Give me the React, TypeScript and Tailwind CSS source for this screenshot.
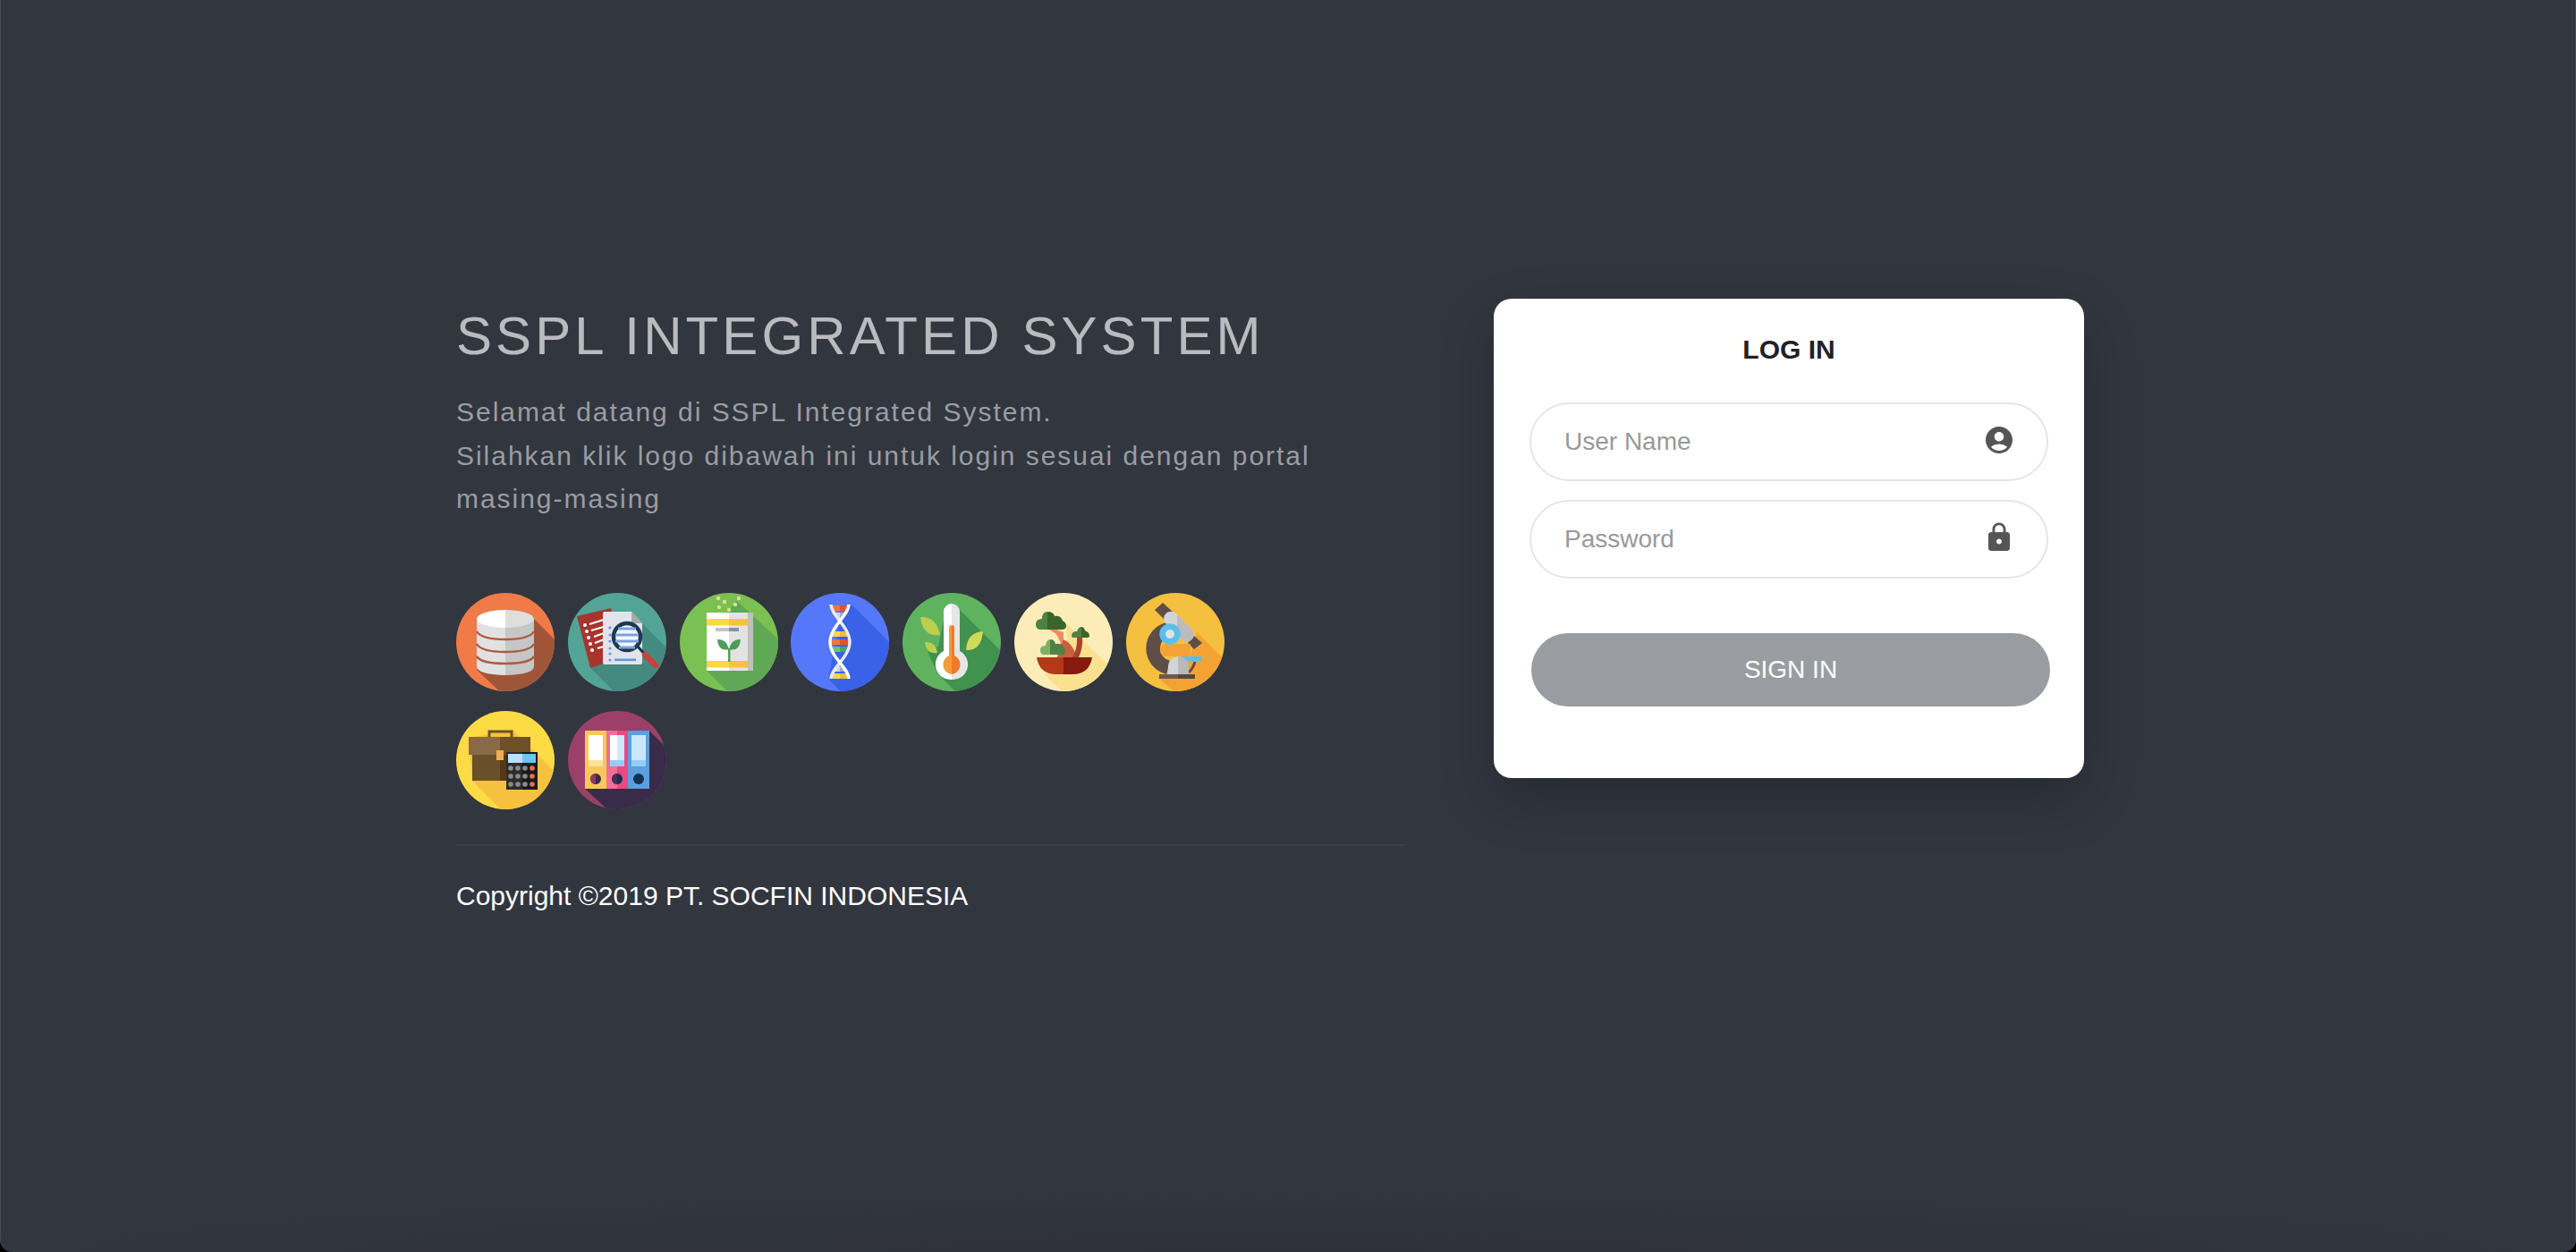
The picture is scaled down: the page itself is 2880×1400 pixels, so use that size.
import React from "react";
import { MdAccountCircle, MdLock } from "react-icons/md";

const Disc = ({ id, bg, shadow, points, children }: { id: string; bg: string; shadow: string; points: string; children: React.ReactNode }) => (
  <svg viewBox="0 0 110 110" className="w-[110px] h-[110px] shrink-0">
    <defs>
      <clipPath id={id}>
        <circle cx="55" cy="55" r="55" />
      </clipPath>
    </defs>
    <g clipPath={`url(#${id})`}>
      <rect width="110" height="110" fill={bg} />
      <polygon points={points} fill={shadow} />
      {children}
    </g>
  </svg>
);

const Database = () => (
  <Disc id="d1" bg="#f07a48" shadow="#a15538" points="87,29 125,67 125,125 64,125 23,86">
    <path d="M23 29V82Q23 91 55 92V29Z" fill="#e1e1e1" />
    <path d="M87 29V82Q87 91 55 92V29Z" fill="#c6c6c6" />
    <path d="M23 29A32 10 0 0 1 55 19V39A32 10 0 0 1 23 29Z" fill="#ffffff" />
    <path d="M87 29A32 10 0 0 0 55 19V39A32 10 0 0 0 87 29Z" fill="#dedede" />
    <path d="M23 43Q28 52 55 52Q82 52 87 43M23 57Q28 66 55 66Q82 66 87 57M23 71Q28 79 55 79Q82 79 87 71" fill="none" stroke="#ad5c3f" strokeWidth="2.4" />
  </Disc>
);

const Docs = () => (
  <Disc id="d2" bg="#52a596" shadow="#458a80" points="83,34 125,76 125,125 66,125 25,84 39,60 66,21">
    <polygon points="10,26 48,17 60,72 25,84" fill="#a8342c" />
    <g fill="#ffffff">
      <circle cx="19" cy="36" r="2" />
      <circle cx="21" cy="43" r="2" />
      <circle cx="23" cy="50" r="2" />
      <circle cx="25" cy="57" r="2" />
      <circle cx="27" cy="64" r="2" />
    </g>
    <path d="M24 35L43 29M26 42L43 37M29 49L43 44M30 56L43 51M33 62L43 59" stroke="#ffffff" strokeWidth="2.2" />
    <path d="M39 23Q39 21 41 21H71L83 34V78Q83 80 81 80H42Q39 80 39 78Z" fill="#e2e4ec" />
    <polygon points="71,21 83,34 71,34" fill="#a9a9a9" />
    <g fill="#6a94d8">
      <circle cx="47" cy="39" r="1.6" />
      <circle cx="47" cy="47" r="1.6" />
      <circle cx="47" cy="54" r="1.6" />
      <circle cx="47" cy="62" r="1.6" />
      <circle cx="47" cy="68" r="1.6" />
      <circle cx="47" cy="75" r="1.6" />
      <rect x="52" y="73.5" width="24" height="2.6" />
    </g>
    <path d="M78 60L88 71" stroke="#17304a" strokeWidth="3" />
    <path d="M86 69L98 81" stroke="#c9423a" strokeWidth="6.5" strokeLinecap="round" />
    <circle cx="66" cy="49" r="15" fill="#f4f6fb" stroke="#1c3a52" strokeWidth="4.5" />
    <path d="M56 40H76M53 47H79M53 54H79M57 61H75" stroke="#7ba2e0" strokeWidth="3" />
  </Disc>
);

const Seed = () => (
  <Disc id="d3" bg="#7ac052" shadow="#60a856" points="64,9 125,66 125,125 68,125 30,87 30,22 52,22">
    <rect x="30" y="22" width="25" height="65" fill="#ffffff" />
    <rect x="55" y="22" width="21" height="65" fill="#e3e3e3" />
    <rect x="76" y="22" width="6" height="65" fill="#bfbfbf" />
    <rect x="30" y="29" width="25" height="7.5" fill="#fdd843" />
    <rect x="55" y="29" width="21" height="7.5" fill="#f5c242" />
    <rect x="30" y="76" width="25" height="7.5" fill="#fdd843" />
    <rect x="55" y="76" width="21" height="7.5" fill="#f5c242" />
    <rect x="40" y="39" width="15" height="4" fill="#c4c4c4" />
    <rect x="55" y="39" width="11" height="4" fill="#7f95a5" />
    <rect x="54" y="62" width="2.5" height="15" fill="#5a9e5b" />
    <path d="M42 52Q52 51 55 63Q43 66 42 52Z" fill="#4d9c5a" />
    <path d="M68 52Q58 51 55 63Q67 66 68 52Z" fill="#4d9c5a" />
    <g fill="#e5dc8d">
      <circle cx="43" cy="6" r="2.2" />
      <circle cx="50" cy="10" r="2.2" />
      <circle cx="44" cy="16" r="2.2" />
      <circle cx="55" cy="19" r="2.2" />
      <circle cx="62" cy="13" r="2.2" />
      <circle cx="66" cy="6" r="2.2" />
    </g>
  </Disc>
);

const Dna = () => {
  const rungs: [number, number, string, string][] = [
    [17, 8, "#f0773a", "#e5512c"],
    [25, 5, "#d3d5dd", "#a9abb3"],
    [46, 8, "#fbd84a", "#f3bd3b"],
    [55, 10, "#f0773a", "#e5512c"],
    [63, 8, "#6ec36d", "#49a65e"],
    [85, 5, "#d3d5dd", "#a9abb3"],
    [93, 8, "#fbd84a", "#f3bd3b"],
  ];
  return (
    <Disc id="d4" bg="#5578fa" shadow="#3a62e8" points="68,13 125,70 125,125 70,125 42,96 55,30">
      {rungs.map(([y, w, a, b]) => (
        <g key={y}>
          <rect x={55 - w} y={y - 3} width={w} height="6" fill={a} />
          <rect x="55" y={y - 3} width={w} height="6" fill={b} />
        </g>
      ))}
      <g fill="none" strokeWidth="3.4">
        <path d="M45 13C45 25 66 38 66 55C66 72 45 84 45 96" stroke="#e8eaf6" />
        <path d="M65 13C65 25 44 38 44 55C44 72 65 84 65 96" stroke="#ffffff" />
      </g>
    </Disc>
  );
};

const Thermo = () => (
  <Disc id="d5" bg="#5fb35f" shadow="#41914f" points="64,19 125,80 125,125 74,125 39,90 28,66 40,60 46,30">
    <path d="M20 27Q38 26 42 47Q23 50 20 27Z" fill="#bdcf4c" />
    <path d="M25 55Q37 54 39 67Q27 69 25 55Z" fill="#bdcf4c" />
    <path d="M90 43Q72 44 71 64Q88 65 90 43Z" fill="#d0da5a" />
    <path d="M46 21A9 9 0 0 1 55 12V97A17 17 0 0 1 46 65Z" fill="#ffffff" />
    <path d="M64 21A9 9 0 0 0 55 12V97A17 17 0 0 0 64 65Z" fill="#e6e6e6" />
    <path d="M52 39A3 3 0 0 1 55 36V91A11 11 0 0 1 52 70Z" fill="#f39c3a" />
    <path d="M58 39A3 3 0 0 0 55 36V91A11 11 0 0 0 58 70Z" fill="#ee7b2c" />
  </Disc>
);

const Bonsai = () => (
  <Disc id="d6" bg="#fcedb8" shadow="#fae18f" points="58,34 125,101 125,125 69,125 33,91 60,72">
    <path d="M36 40Q48 44 50 52Q55 60 50 72H55V44Q44 40 42 38Z" fill="#ee8a5e" />
    <path d="M55 52Q65 56 70 72H48Q50 62 55 52Z" fill="#c9603c" />
    <path d="M65 72Q71 62 70 48H76Q77 62 72 72Z" fill="#a5452a" />
    <path d="M25 72H55V91H47Q28 91 25 72Z" fill="#b23a18" />
    <path d="M87 72H55V91H65Q84 91 87 72Z" fill="#871a0f" />
    <path d="M37 41H30Q24 41 24 35Q24 29 31 29Q31 21 37 21Z" fill="#4f8145" />
    <path d="M37 21Q44 21 45 26Q52 25 54 31Q58 33 58 37Q58 41 53 41H37Z" fill="#3a6428" />
    <path d="M64 48Q64 43 70 43Q72 38 75 38V50H67Q64 50 64 48Z" fill="#4f8145" />
    <path d="M75 38Q78 38 79 42Q84 44 84 48Q84 50 81 50H75Z" fill="#3a6428" />
    <path d="M40 69H33Q29 69 29 64Q29 59 35 59Q36 52 40 52Z" fill="#7fae68" />
    <path d="M40 52Q45 52 46 57Q53 56 55 60Q57 62 57 65Q57 69 53 69H40Z" fill="#4f8145" />
  </Disc>
);

const Microscope = () => (
  <Disc id="d7" bg="#f5c040" shadow="#f5a235" points="79,44 125,90 125,125 70,125 35,94 62,90 72,70">
    <defs>
      <clipPath id="d7r">
        <rect x="57" y="0" width="53" height="110" />
      </clipPath>
    </defs>
    <polygon points="32,19 41,11 52,21 43,30" fill="#5f4e48" />
    <polygon points="69,56 76,48 85,56 76,63" fill="#5f4e48" />
    <path d="M47 40.6A22 22 0 0 0 47 83.4" fill="none" stroke="#5f4e48" strokeWidth="15.5" />
    <path d="M45 57H72V71H45A7 7 0 0 1 45 57Z" fill="#f5a235" />
    <path d="M70 89Q75 84 77 77" fill="none" stroke="#5f4e48" strokeWidth="3" />
    <rect x="38.5" y="29.5" width="41" height="16" rx="8" transform="rotate(45 59 37.5)" fill="#d3d3d8" />
    <g clipPath="url(#d7r)">
      <rect x="38.5" y="29.5" width="41" height="16" rx="8" transform="rotate(45 59 37.5)" fill="#bbbabd" />
    </g>
    <circle cx="49" cy="46" r="11.7" fill="#5bbfea" />
    <circle cx="49" cy="46" r="5" fill="#dfe3ea" />
    <rect x="62" y="71" width="23" height="5" fill="#5bbfea" />
    <path d="M47 92V82A11.5 11.5 0 0 1 58 71V92Z" fill="#d3d3d8" />
    <path d="M70 92V82A11.5 11.5 0 0 0 58 71V92Z" fill="#b9b8bc" />
    <rect x="37" y="91" width="21" height="5" fill="#6b5a52" />
    <rect x="58" y="91" width="19" height="5" fill="#564640" />
  </Disc>
);

const Briefcase = () => {
  const rows = [64, 73, 82];
  const cols = [61, 69, 77, 85];
  return (
    <Disc id="d8" bg="#fddb45" shadow="#f5c13f" points="63,21 125,83 125,125 65,125 18,78 14,30">
      <path d="M37 30V23H62V30" fill="#f5c13f" stroke="#6e5029" strokeWidth="3" />
      <rect x="14" y="29" width="35" height="20" fill="#8a6a45" />
      <rect x="49" y="29" width="34" height="20" fill="#6e5029" />
      <rect x="18" y="49" width="31" height="29" fill="#6a4f2b" />
      <rect x="49" y="49" width="31" height="29" fill="#523a18" />
      <rect x="45" y="44" width="8" height="11" fill="#eeb04f" />
      <rect x="56" y="46" width="18" height="42" fill="#2c2c2c" />
      <rect x="74" y="46" width="17" height="42" fill="#1a1a1a" />
      <rect x="58" y="48" width="16" height="10" fill="#b8e2fb" />
      <rect x="74" y="48" width="15" height="10" fill="#64c8fa" />
      {rows.map((y) =>
        cols.map((x) => (
          <circle key={`${x}-${y}`} cx={x} cy={y} r="2.8" fill={x === 85 ? "#f2703f" : "#8a8a8a"} />
        ))
      )}
    </Disc>
  );
};

const Binders = () => (
  <Disc id="d9" bg="#9c4069" shadow="#392c4a" points="91,22 125,56 125,125 60,125 19,87">
    <rect x="19" y="22" width="24" height="65" fill="#f8c85a" />
    <rect x="43" y="22" width="12" height="65" fill="#ef6e96" />
    <rect x="55" y="22" width="12" height="65" fill="#e94a7f" />
    <rect x="67" y="22" width="24" height="65" fill="#5a9fdf" />
    <rect x="23" y="27" width="16" height="28" fill="#ffffff" />
    <rect x="23" y="55" width="16" height="7" fill="#fbe19a" />
    <rect x="47" y="27" width="8" height="28" fill="#ffffff" />
    <rect x="55" y="27" width="8" height="28" fill="#cfe9ff" />
    <rect x="47" y="55" width="16" height="7" fill="#95cdfa" />
    <rect x="71" y="27" width="16" height="28" fill="#cbe7ff" />
    <rect x="71" y="55" width="16" height="7" fill="#95cdfa" />
    <circle cx="31" cy="76" r="6" fill="#3a2a4c" />
    <path d="M31 70A6 6 0 0 0 31 82Z" fill="#8a3a62" />
    <circle cx="55" cy="76" r="6" fill="#12304f" />
    <path d="M55 70A6 6 0 0 0 55 82Z" fill="#4a2f55" />
    <circle cx="79" cy="76" r="6" fill="#12304f" />
  </Disc>
);

const Field = ({ placeholder, type, icon }: { placeholder: string; type: string; icon: React.ReactNode }) => (
  <div className="relative">
    <input
      type={type}
      placeholder={placeholder}
      className="w-[580px] h-[88px] rounded-full border-2 border-[#e6e6e6] bg-white pl-[37px] pr-[80px] text-[28px] text-[#555] placeholder:text-[#999] outline-none"
    />
    <span className="absolute right-[37px] top-[24px] text-[#555]">{icon}</span>
  </div>
);

export default function App() {
  return (
    <div className="w-full h-[1400px] bg-black">
      <div className="h-full bg-[#32363f] bg-[radial-gradient(ellipse_1500px_70px_at_50%_100%,#2e3139,transparent)] font-['Liberation_Sans',Arial,sans-serif] rounded-b-[14px] border-x border-[#474a54] overflow-hidden">
        <div className="flex items-start pl-[509px] pt-[334px] gap-[100px]">
          <div className="w-[1060px] pt-[12px]">
            <h1 className="text-[60px] leading-[60px] font-normal tracking-[4.1px] text-[#b9bbbf]">SSPL INTEGRATED SYSTEM</h1>
            <p className="mt-[31px] text-[30px] leading-[48.6px] tracking-[1.97px] text-[#9a9da3]">
              Selamat datang di SSPL Integrated System.
              <br />
              Silahkan klik logo dibawah ini untuk login sesuai dengan portal
              <br />
              masing-masing
            </p>
            <div className="mt-[80px] flex flex-wrap gap-x-[14.75px] gap-y-[22px] w-[900px]">
              <Database />
              <Docs />
              <Seed />
              <Dna />
              <Thermo />
              <Bonsai />
              <Microscope />
              <Briefcase />
              <Binders />
            </div>
            <hr className="mt-[39px] border-t-2 border-[#3e414b]" />
            <p className="mt-[36px] text-[30px] leading-[40px] text-white">Copyright ©2019 PT. SOCFIN INDONESIA</p>
          </div>
          <div className="w-[660px] h-[536px] rounded-[20px] bg-white pt-[40px] px-[40px] shadow-[0_24px_60px_rgba(0,0,0,0.22)]">
            <h2 className="text-center text-[30px] leading-[34px] font-bold text-[#222]">LOG IN</h2>
            <div className="mt-[42px] flex flex-col gap-[21px]">
              <Field placeholder="User Name" type="text" icon={<MdAccountCircle size={36} />} />
              <Field placeholder="Password" type="password" icon={<MdLock size={36} />} />
            </div>
            <button className="mt-[61px] ml-[2px] w-[580px] h-[82px] rounded-full bg-[#999ca0] text-[28px] text-white">SIGN IN</button>
          </div>
        </div>
      </div>
    </div>
  );
}
